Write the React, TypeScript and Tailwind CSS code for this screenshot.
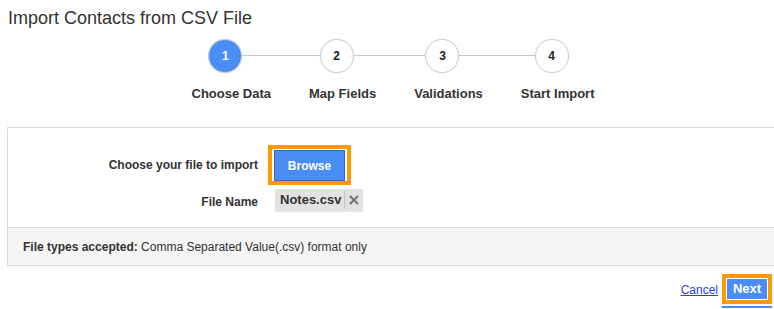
import React from "react";

const steps = [
  { n: "1", label: "Choose Data", active: true },
  { n: "2", label: "Map Fields", active: false },
  { n: "3", label: "Validations", active: false },
  { n: "4", label: "Start Import", active: false },
];

export default function App() {
  return (
    <div
      className="relative w-[774px] h-[309px] overflow-hidden bg-white text-[#333]"
      style={{ fontFamily: '"Liberation Sans", Arial, sans-serif' }}
    >
      <h1 className="pl-[8px] pt-[7px] text-[18px] leading-[22px] text-[#333]">
        Import Contacts from CSV File
      </h1>

      <div className="mt-[10px] flex justify-center">
        <div className="relative flex gap-[26px]">
          <div className="absolute left-[45px] right-[43px] top-[16px] h-px bg-[#c8c8c8]" />
          {steps.map((s) => (
            <div key={s.n} className="relative flex flex-col items-center">
              <div
                className={
                  s.active
                    ? "flex h-[34px] w-[34px] items-center justify-center rounded-full border border-[#d0d0d0] bg-[#4a8ff8] text-[12px] font-bold text-white shadow-[0_0_1px_rgba(0,0,0,0.2)]"
                    : "flex h-[34px] w-[34px] items-center justify-center rounded-full border border-[#cfcfcf] bg-white text-[12px] font-bold text-[#222] shadow-[0_0_1px_rgba(0,0,0,0.15)]"
                }
              >
                {s.n}
              </div>
              <div className="mt-[13px] pl-[12px] text-[13px] leading-[16px] font-bold text-[#333] whitespace-nowrap">
                {s.label}
              </div>
            </div>
          ))}
        </div>
      </div>

      <div className="ml-[7px] mt-[25px] w-[790px] border border-[#dcdcdc] shadow-[0_2px_3px_rgba(0,0,0,0.05)]">
        <div className="flex flex-col gap-[4px] pt-[17px] pb-[16px]">
          <div className="flex items-center">
            <div className="w-[260px] pr-[10px] text-right text-[12px] font-bold text-[#333]">
              Choose your file to import
            </div>
            <div className="border-[4px] border-[#ff9900] px-[2px] pt-[1px]">
              <button className="h-[31px] w-[71px] border border-[#3565c0] bg-[#4a8cf5] text-[12px] font-bold text-white">
                Browse
              </button>
            </div>
          </div>
          <div className="flex items-center">
            <div className="w-[260px] pr-[10px] pt-[4px] text-right text-[12px] font-bold text-[#333]">
              File Name
            </div>
            <div className="ml-[7px] flex h-[22px] items-center bg-[#e2e2e2] pl-[5px] pr-[3px] shadow-[0_1px_1px_rgba(0,0,0,0.08)]">
              <span className="text-[13px] font-bold text-[#333]">Notes.csv</span>
              <span className="ml-[3px] h-[18px] w-px bg-[#c4c4c4]" />
              <svg width="12" height="12" viewBox="0 0 12 12" className="ml-[3px]">
                <path d="M2 2 L10 10 M10 2 L2 10" stroke="#777" strokeWidth="2.2" />
              </svg>
            </div>
          </div>
        </div>
        <div className="flex h-[38px] items-center border-t border-[#dcdcdc] bg-[#f4f4f4] pl-[15px] text-[12px] text-[#333]">
          <span className="font-bold">File types accepted:</span>
          <span>&nbsp;Comma Separated Value(.csv) format only</span>
        </div>
      </div>

      <div className="absolute right-[2px] top-[274px] flex items-start">
        <a href="#" className="mr-[4px] mt-[9px] text-[12px] leading-[14px] text-[#2a3fd6] underline">
          Cancel
        </a>
        <div className="flex flex-col">
          <div className="h-[30px] border-[4px] border-[#ff9900] bg-white p-px">
            <div className="flex h-[20px] w-[40px] items-center justify-center bg-[#4a8cf5] text-[13px] font-bold text-white">
              Next
            </div>
          </div>
          <div className="mt-[2px] h-[2px] w-full bg-[#4a8cf5]" />
        </div>
      </div>
    </div>
  );
}
